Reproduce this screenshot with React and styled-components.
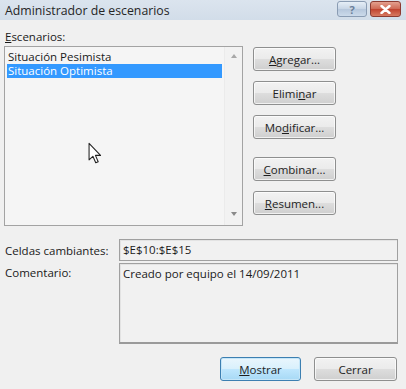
import styled, { createGlobalStyle } from 'styled-components'

const Global = createGlobalStyle`
  html, body {
    margin: 0;
    padding: 0;
    background: #f0f0f0;
  }
  body {
    font-family: "Open Sans", "Noto Sans", sans-serif;
    font-size: 11.5px;
    color: #1a1a1a;
  }
`

const Window = styled.div`
  width: 406px;
  height: 389px;
  box-sizing: border-box;
  display: flex;
  flex-direction: column;
  background: #f0f0f0;
  overflow: hidden;
`

const TitleBar = styled.div`
  height: 20px;
  flex: none;
  display: flex;
  align-items: center;
  justify-content: space-between;
  padding: 0 5px 0 5px;
  background: linear-gradient(#dbe4ee, #d2dde9);
`

const Title = styled.div`
  font-size: 12.3px;
  color: #262626;
`

const Caption = styled.div`
  display: flex;
  gap: 3px;
  align-self: flex-start;
  margin-top: 1px;
`

const CaptionButton = styled.div`
  width: ${p => p.$w}px;
  height: 16px;
  box-sizing: border-box;
  border: 1px solid ${p => (p.$close ? '#8c3b32' : '#8a9cb3')};
  border-radius: 3px;
  display: flex;
  align-items: center;
  justify-content: center;
  font-weight: 700;
  font-size: 11px;
  background: ${p =>
    p.$close
      ? 'linear-gradient(#e3a08f, #cf6a56 48%, #c0432f 52%, #d77a62)'
      : 'linear-gradient(#e6eef7, #c8d6e6 48%, #b6c7dc 52%, #cbdaea)'};
  color: ${p => (p.$close ? '#fff' : '#6b7f99')};
`

const Body = styled.div`
  flex: 1;
  display: flex;
  flex-direction: column;
  padding: 10px 9px 0 4px;
`

const Label = styled.div`
  line-height: 14px;
  padding-left: 1px;
`

const TopRow = styled.div`
  display: flex;
  gap: 10px;
  margin-top: 2px;
`

const ListBox = styled.div`
  position: relative;
  width: 239px;
  height: 180px;
  box-sizing: border-box;
  border: 1px solid #a3a3a3;
  background: #f5f5f5;
  display: flex;
`

const Items = styled.div`
  flex: 1;
  padding: 3px 2px 0 2px;
`

const Item = styled.div`
  height: 14px;
  line-height: 14px;
  padding-left: 1px;
  background: ${p => (p.$selected ? '#3399ff' : 'transparent')};
  color: ${p => (p.$selected ? '#fff' : '#1a1a1a')};
`

const ScrollTrack = styled.div`
  width: 17px;
  display: flex;
  flex-direction: column;
  justify-content: space-between;
  align-items: center;
  padding: 7px 0 9px;
  background: #f2f2f2;
  border-left: 1px solid #ebebeb;
`

const Arrow = styled.div`
  width: 0;
  height: 0;
  border-left: 3.5px solid transparent;
  border-right: 3.5px solid transparent;
  ${p =>
    p.$down
      ? 'border-top: 4px solid #8a8a8a;'
      : 'border-bottom: 4px solid #a8a8a8;'}
`

const Cursor = styled.svg`
  position: absolute;
  left: 83px;
  top: 95px;
`

const ButtonColumn = styled.div`
  display: flex;
  flex-direction: column;
  gap: 10px;
  padding-top: 1px;
`

const Button = styled.div`
  width: ${p => p.$w || 83}px;
  height: 24px;
  box-sizing: border-box;
  border: 1px solid ${p => (p.$default ? '#3c7fb1' : '#8e8f8f')};
  border-radius: 3px;
  display: flex;
  align-items: center;
  justify-content: center;
  margin-top: ${p => p.$gapTop || 0}px;
  background: ${p =>
    p.$default
      ? 'linear-gradient(#eaf6fd, #d9f0fc 48%, #bee6fd 52%, #a7d9f5)'
      : 'linear-gradient(#f2f2f2, #ebebeb 48%, #dddddd 52%, #cfcfcf)'};
  box-shadow: inset 0 0 0 1px ${p => (p.$default ? '#c5e6f8' : 'rgba(255,255,255,0.7)')};
  color: #1e1e1e;
  u {
    text-underline-offset: 1px;
  }
`

const Fields = styled.div`
  display: grid;
  grid-template-columns: 115px 279px;
  row-gap: 2px;
  margin-top: 13px;
`

const FieldLabel = styled.div`
  padding-left: 1px;
  padding-top: ${p => p.$pt || 3}px;
`

const TextBox = styled.div`
  height: ${p => p.$h}px;
  box-sizing: border-box;
  border: 1px solid #a0a0a0;
  border-bottom: ${p => (p.$multi ? '2px solid #9a9a9a' : '1px solid #a0a0a0')};
  box-shadow: inset 1px 1px 0 #e3e3e3;
  background: #f1f1f1;
  padding: 3px 3px;
  line-height: 14px;
`

const Footer = styled.div`
  display: flex;
  justify-content: flex-end;
  gap: 13px;
  margin-top: 13px;
`

const Scenario = ({ name, selected }) => (
  <Item $selected={selected}>{name}</Item>
)

export default function App() {
  return (
    <>
      <Global />
      <Window>
        <TitleBar>
          <Title>Administrador de escenarios</Title>
          <Caption>
            <CaptionButton $w={30}>?</CaptionButton>
            <CaptionButton $w={31} $close>
              <svg width="11" height="9" viewBox="0 0 11 9">
                <path d="M1.5 1 L9.5 8 M9.5 1 L1.5 8" stroke="#fff" strokeWidth="2.4" strokeLinecap="round" />
              </svg>
            </CaptionButton>
          </Caption>
        </TitleBar>
        <Body>
          <Label><u>E</u>scenarios:</Label>
          <TopRow>
            <ListBox>
              <Items>
                <Scenario name="Situación Pesimista" />
                <Scenario name="Situación Optimista" selected />
              </Items>
              <ScrollTrack>
                <Arrow />
                <Arrow $down />
              </ScrollTrack>
              <Cursor width="17" height="24" viewBox="0 0 16 22">
                <path d="M1 1 L1 16.5 L4.6 13.2 L7.3 19.3 L9.6 18.3 L7 12.3 L11.8 12.3 Z" fill="#fff" stroke="#222" strokeWidth="1" strokeLinejoin="round" />
              </Cursor>
            </ListBox>
            <ButtonColumn>
              <Button><span><u>A</u>gregar...</span></Button>
              <Button><span>Elimi<u>n</u>ar</span></Button>
              <Button><span>Mo<u>d</u>ificar...</span></Button>
              <Button $gapTop={8}><span><u>C</u>ombinar...</span></Button>
              <Button><span><u>R</u>esumen...</span></Button>
            </ButtonColumn>
          </TopRow>
          <Fields>
            <FieldLabel $pt={4}>Celdas cambiantes:</FieldLabel>
            <TextBox $h={22}>$E$10:$E$15</TextBox>
            <FieldLabel $pt={2}>Comentario:</FieldLabel>
            <TextBox $h={81} $multi>Creado por equipo el 14/09/2011</TextBox>
          </Fields>
          <Footer>
            <Button $w={81} $default><span><u>M</u>ostrar</span></Button>
            <Button $w={83}>Cerrar</Button>
          </Footer>
        </Body>
      </Window>
    </>
  )
}
